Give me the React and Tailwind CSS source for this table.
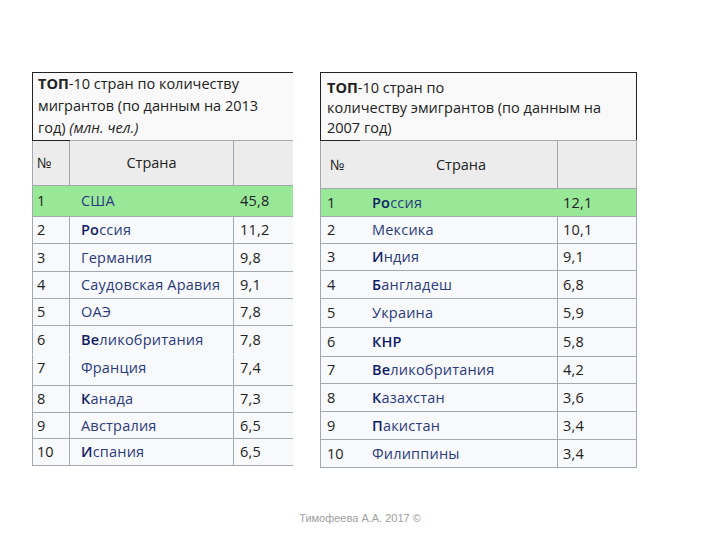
import React from "react";

const F = { fontFamily: '"Open Sans", "Liberation Sans", sans-serif' };

const leftRows = [
  { n: "1", b: "", r: "США", v: "45,8", h: "h-[31px]", green: true },
  { n: "2", b: "Ро", r: "ссия", v: "11,2", h: "h-[27px]" },
  { n: "3", b: "", r: "Германия", v: "9,8", h: "h-[28px]" },
  { n: "4", b: "", r: "Саудовская Аравия", v: "9,1", h: "h-[27px]" },
  { n: "5", b: "", r: "ОАЭ", v: "7,8", h: "h-[27px]" },
  { n: "6", b: "Ве", r: "ликобритания", v: "7,8", h: "h-[29px]" },
  { n: "7", b: "", r: "Франция", v: "7,4", h: "h-[31px]", noLine: true },
  { n: "8", b: "К", r: "анада", v: "7,3", h: "h-[27px]" },
  { n: "9", b: "", r: "Австралия", v: "6,5", h: "h-[26px]" },
  { n: "10", b: "И", r: "спания", v: "6,5", h: "h-[27px]" },
];

const rightRows = [
  { n: "1", b: "Ро", r: "ссия", v: "12,1", h: "h-[28px]", green: true },
  { n: "2", b: "", r: "Мексика", v: "10,1", h: "h-[27px]" },
  { n: "3", b: "И", r: "ндия", v: "9,1", h: "h-[27px]" },
  { n: "4", b: "Б", r: "англадеш", v: "6,8", h: "h-[28px]" },
  { n: "5", b: "", r: "Украина", v: "5,9", h: "h-[29px]" },
  { n: "6", b: "КНР", r: "", v: "5,8", h: "h-[29px]" },
  { n: "7", b: "Ве", r: "ликобритания", v: "4,2", h: "h-[27px]" },
  { n: "8", b: "К", r: "азахстан", v: "3,6", h: "h-[28px]" },
  { n: "9", b: "П", r: "акистан", v: "3,4", h: "h-[28px]" },
  { n: "10", b: "", r: "Филиппины", v: "3,4", h: "h-[28px]" },
];

function Name({ b, r }) {
  return (
    <span className="text-[#2a3a7e] tracking-[0.2px]">
      {b && <span className="font-semibold text-[#0f1d66]">{b}</span>}
      {r}
    </span>
  );
}

function LeftTable() {
  return (
    <div className="w-[261px] flex flex-col text-[14.5px] text-[#222]" style={F}>
      <div className="h-[68px] bg-[#f9f9f9] border-l border-t border-[#222] pl-[5px] pt-0 leading-[22px] whitespace-nowrap">
        <span className="font-bold">ТОП</span>-10 стран по количеству
        <br />
        мигрантов (по данным на 2013
        <br />
        год) <i>(млн. чел.)</i>
      </div>
      <div className="flex h-px">
        <div className="w-[38px] bg-[#222]" />
        <div className="flex-1 bg-[#a2a9b1]" />
      </div>
      <div className="flex h-[44px] bg-[#ececec] border-l border-[#a2a9b1]">
        <div className="w-[37px] border-r border-[#a2a9b1] flex items-center pl-[4px]">№</div>
        <div className="w-[164px] border-r border-[#a2a9b1] flex items-center justify-center">Страна</div>
        <div className="flex-1" />
      </div>
      {leftRows.map((row) => (
        <div
          key={row.n}
          className={`flex ${row.h} border-l border-t ${row.noLine ? "border-t-[#f8f9fa] border-l-[#a2a9b1]" : "border-[#a2a9b1]"} ${row.green ? "bg-[#98e898]" : "bg-[#f8f9fa]"}`}
        >
          <div className={`w-[37px] self-stretch flex ${row.noLine ? "items-start pt-[2px]" : "items-center"} pl-[4px] border-r ${row.green ? "border-[#98e898]" : "border-[#a2a9b1]"}`}>{row.n}</div>
          <div className={`w-[164px] self-stretch flex ${row.noLine ? "items-start pt-[2px]" : "items-center"} pl-[11px] border-r ${row.green ? "border-[#98e898]" : "border-[#a2a9b1]"}`}>
            <Name b={row.b} r={row.r} />
          </div>
          <div className={`flex-1 self-stretch flex ${row.noLine ? "items-start pt-[2px]" : "items-center"} pl-[6px] tracking-[0.2px]`}>{row.v}</div>
        </div>
      ))}
      <div className="h-px bg-[#a2a9b1]" />
    </div>
  );
}

function RightTable() {
  return (
    <div className="w-[317px] flex flex-col text-[14.5px] text-[#222]" style={F}>
      <div className="h-[68px] bg-[#f9f9f9] border-l border-t border-r border-[#222] pl-[6px] pt-[5px] leading-[20px] whitespace-nowrap">
        <span className="font-bold">ТОП</span>-10 стран по
        <br />
        количеству эмигрантов (по данным на
        <br />
        2007 год)
      </div>
      <div className="flex h-px">
        <div className="w-[40px] bg-[#222]" />
        <div className="flex-1 bg-[#a2a9b1]" />
      </div>
      <div className="flex h-[47px] bg-[#ececec] border-l border-r border-[#a2a9b1]">
        <div className="w-[44px] flex items-center pl-[9px]">№</div>
        <div className="w-[193px] border-r border-[#a2a9b1] flex items-center justify-center">Страна</div>
        <div className="flex-1" />
      </div>
      {rightRows.map((row) => (
        <div
          key={row.n}
          className={`flex ${row.h} border-l border-r border-t border-[#a2a9b1] ${row.green ? "bg-[#98e898]" : "bg-[#f8f9fa]"}`}
        >
          <div className="w-[44px] flex items-center pl-[6px]">{row.n}</div>
          <div className={`w-[193px] flex items-center pl-[7px] border-r ${row.green ? "border-[#98e898]" : "border-[#a2a9b1]"}`}>
            <Name b={row.b} r={row.r} />
          </div>
          <div className="flex-1 flex items-center pl-[5px] tracking-[0.2px]">{row.v}</div>
        </div>
      ))}
      <div className="h-px bg-[#a2a9b1]" />
    </div>
  );
}

export default function App() {
  return (
    <div className="w-[720px] h-[540px] bg-white relative overflow-hidden">
      <div className="flex items-start pt-[72px] pl-[32px] gap-[27px]">
        <LeftTable />
        <RightTable />
      </div>
      <div
        className="absolute left-0 right-0 top-[510px] text-center text-[11px] text-[#a0a0a0]"
        style={{ fontFamily: '"Liberation Sans", sans-serif' }}
      >
        Тимофеева А.А. 2017 ©
      </div>
    </div>
  );
}
